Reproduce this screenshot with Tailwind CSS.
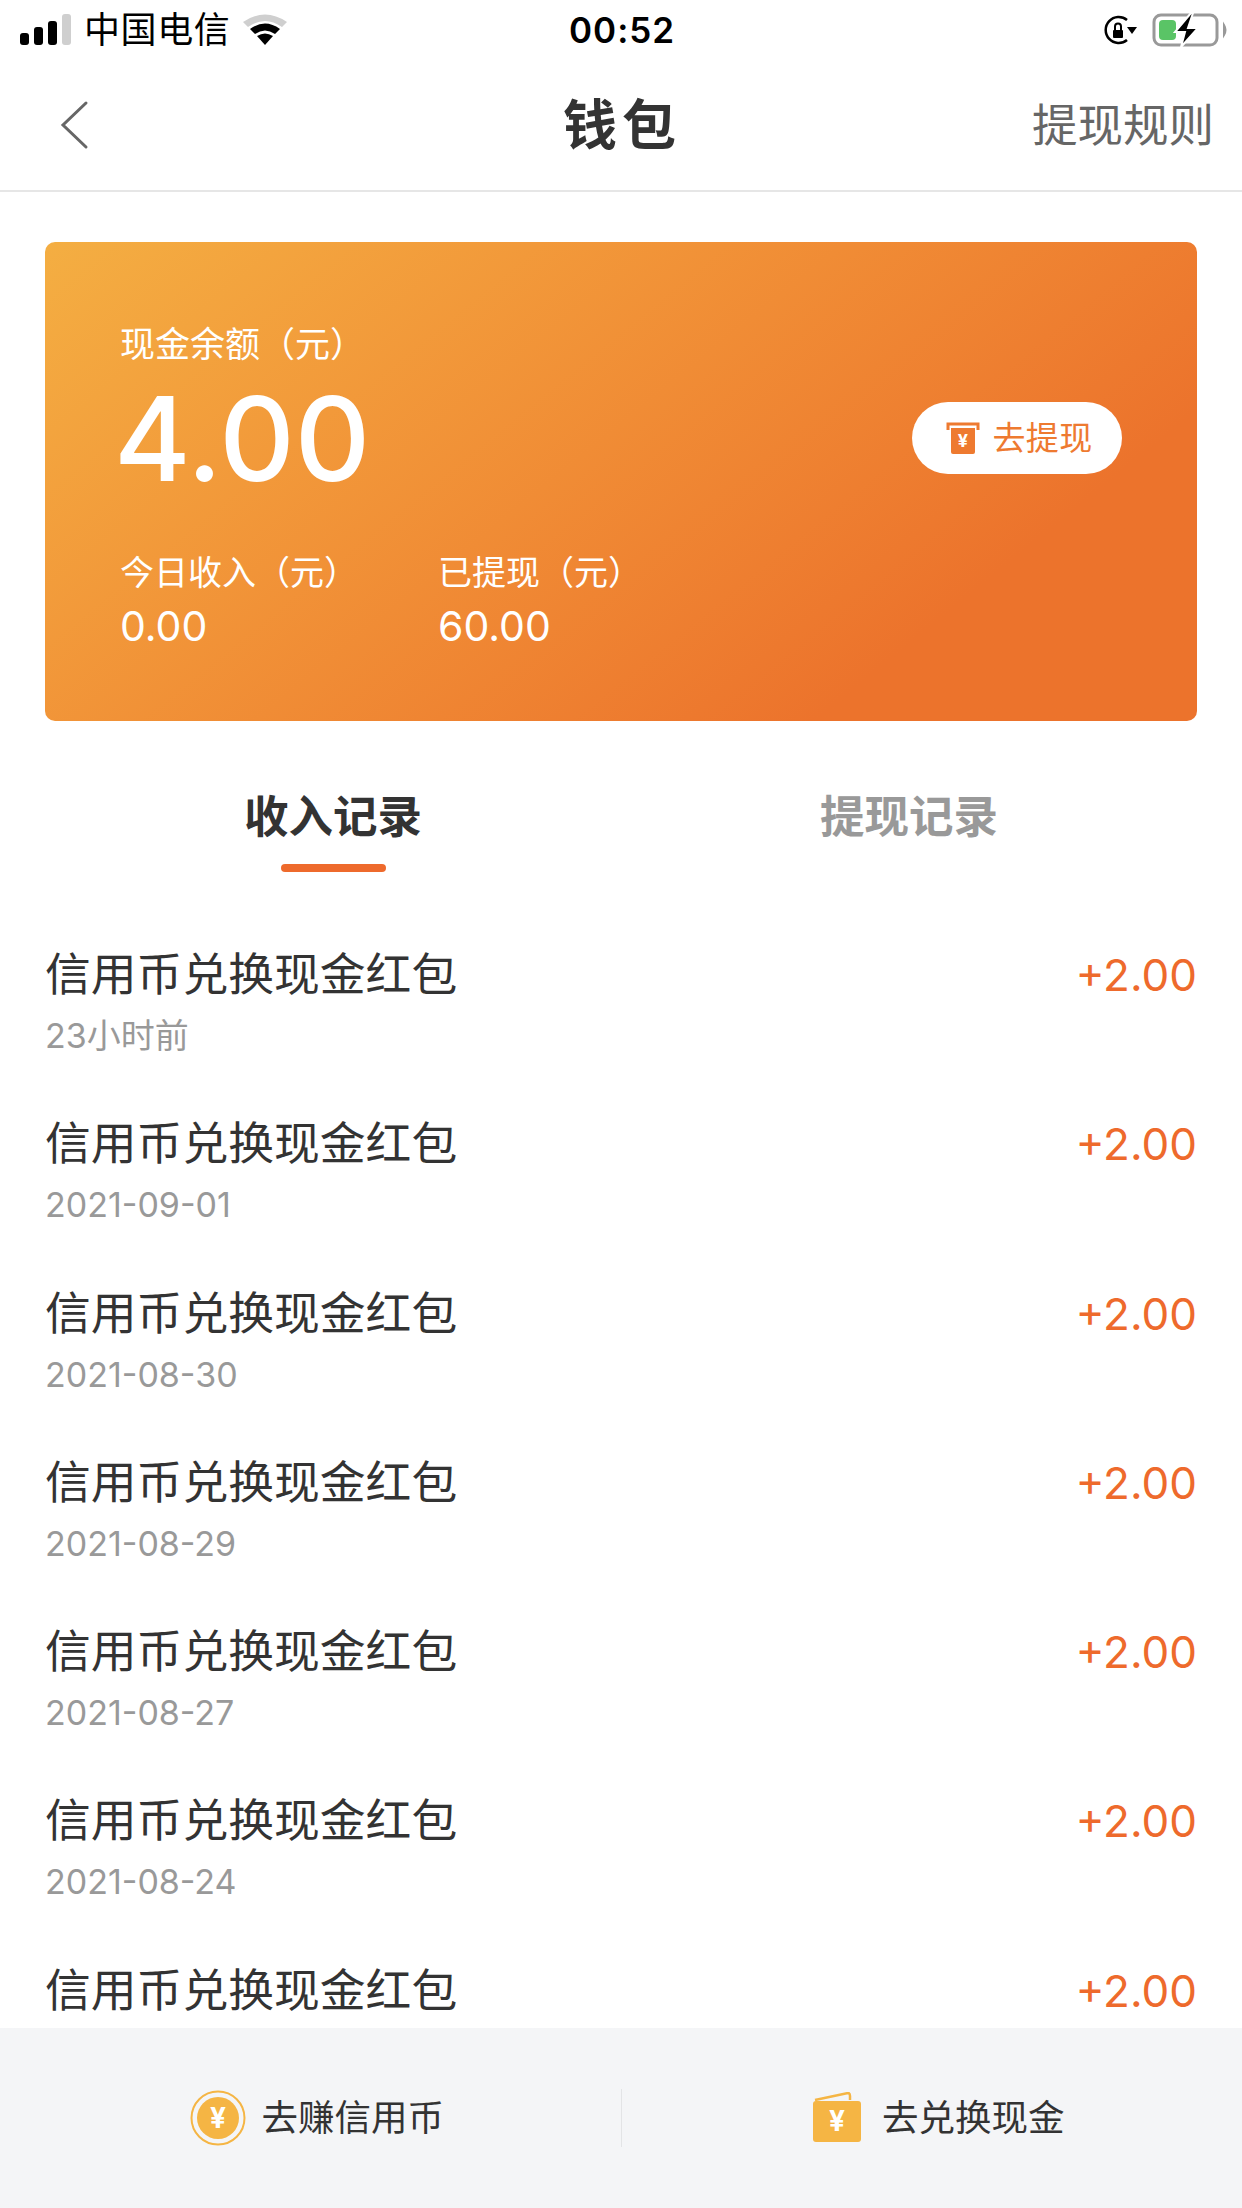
<!DOCTYPE html>
<html lang="zh-CN">
  <head>
    <meta charset="UTF-8" />
    <meta name="viewport" content="width=device-width, initial-scale=1.0" />
    <title>钱包</title>
    <script src="https://cdn.jsdelivr.net/npm/@tailwindcss/browser@4"></script>
  </head>
  <body class="bg-white">
    <div class="w-[1242px] h-[2208px] flex flex-col overflow-hidden font-['Inter','Noto_Sans_CJK_SC',sans-serif] text-[#333333]">
      <!-- Status bar -->
      <div class="h-[60px] shrink-0 flex items-center justify-between pl-[20px] pr-[14px] text-black">
        <div class="flex items-center">
          <svg width="52" height="34" viewBox="0 0 52 34">
            <rect x="0" y="20" width="9" height="12" rx="3" fill="#000" />
            <rect x="14" y="14" width="9" height="18" rx="3" fill="#000" />
            <rect x="28" y="8" width="9" height="24" rx="3" fill="#000" />
            <rect x="42" y="1" width="9" height="31" rx="3" fill="#cfcfcf" />
          </svg>
          <span class="ml-[12px] text-[36px] tracking-[0.6px] leading-none">中国电信</span>
          <svg class="ml-[12px]" width="46" height="34" viewBox="0 0 46 34">
            <path d="M1 9 Q23 -6 45 9 L40 14 Q23 2 6 14 Z" fill="#cfcfcf" />
            <path d="M8 16 Q23 5 38 16 L33 21 Q23 14 13 21 Z" fill="#000" />
            <path d="M15 23 Q23 18 31 23 L23 32 Z" fill="#000" />
          </svg>
        </div>
        <span class="text-[35px] font-semibold tracking-[1px] absolute left-[569px]">00:52</span>
        <div class="flex items-center">
          <svg width="34" height="34" viewBox="0 0 34 34">
            <path d="M23 7 A13 13 0 1 0 23 27" fill="none" stroke="#000" stroke-width="2.5" />
            <path d="M23 14 H33 L28 21 Z" fill="#000" />
            <rect x="9" y="17" width="10" height="8" rx="1" fill="#000" />
            <path d="M11 17 V13.5 A3 3 0 0 1 17 13.5 V17" fill="none" stroke="#000" stroke-width="2" />
          </svg>
          <svg class="ml-[14px]" width="76" height="36" viewBox="0 0 76 36">
            <rect x="2" y="3" width="63" height="30" rx="7" fill="none" stroke="#999999" stroke-width="3" />
            <path d="M72 13 Q75 18 72 23 Z" fill="#999999" stroke="#999999" stroke-width="2" />
            <rect x="7" y="8" width="17" height="20" rx="4" fill="#5ac466" />
            <path d="M39 1 L23 20 L33 20 L29 35 L46 16 L36 16 L41 1 Z" fill="#000" stroke="#fff" stroke-width="2" />
          </svg>
        </div>
      </div>

      <!-- Nav bar -->
      <header class="h-[132px] shrink-0 relative flex items-center justify-center border-b-[2px] border-[#e6e6e6]">
        <svg class="absolute left-[60px] top-[40px]" width="30" height="50" viewBox="0 0 30 50">
          <path d="M26 3 L3 25 L26 47" fill="none" stroke="#666666" stroke-width="3" stroke-linecap="round" />
        </svg>
        <h1 class="text-[54px] font-bold tracking-[5px] pl-[2px] text-[#333333]">钱包</h1>
        <a class="absolute right-[28px] mt-[2px] text-[45.5px] text-[#666666]">提现规则</a>
      </header>

      <main class="flex-1 min-h-0 overflow-hidden">
        <!-- Balance card -->
        <section class="mx-[45px] mt-[50px] h-[479px] rounded-[10px] bg-linear-141 from-[#f4ae42] to-[#ec732c] to-[78%] px-[75px] pt-[80px] text-white">
          <p class="text-[35px] leading-[44px]">现金余额（元）</p>
          <div class="flex items-center justify-between mt-[3px]">
            <p class="text-[117px] leading-[140px] font-medium -ml-[6px]">4.00</p>
            <button class="w-[210px] h-[72px] mb-[3px] pl-[5px] rounded-full bg-white flex items-center justify-center gap-[12px] text-[#ee7a30] text-[33px]">
              <svg width="34" height="34" viewBox="0 0 34 34">
                <path d="M2 9 V3 H32 V9" fill="none" stroke="#ee7a30" stroke-width="3" />
                <path d="M5 7 H29 V31 Q29 33 27 33 H7 Q5 33 5 31 Z" fill="#ee7a30" />
                <text x="17" y="26" text-anchor="middle" font-size="18" font-weight="700" fill="#fff">¥</text>
              </svg>
              <span class="tracking-[0.4px] mt-[2px]">去提现</span>
            </button>
          </div>
          <div class="flex mt-[42px]">
            <div class="w-[318px]">
              <p class="text-[34px] leading-[44px]">今日收入（元）</p>
              <p class="text-[41px] leading-[63px]">0.00</p>
            </div>
            <div>
              <p class="text-[34px] leading-[44px]">已提现（元）</p>
              <p class="text-[41px] leading-[63px]">60.00</p>
            </div>
          </div>
        </section>

        <!-- Tabs -->
        <nav class="flex mt-[64px] h-[90px] px-[45px] text-[44.5px] font-bold leading-[64px]">
          <div class="flex-1 flex flex-col items-center text-[#333333]">
            <span>收入记录</span>
            <span class="w-[105px] h-[8px] rounded-full bg-[#ee6a2c] mt-[15px]"></span>
          </div>
          <div class="flex-1 flex justify-center text-[#999999]">提现记录</div>
        </nav>

        <!-- Records -->
        <ul class="mt-[68px] px-[45px]">
          <li class="h-[169.3px] flex justify-between">
            <div>
              <p class="text-[45.8px] leading-[64px]">信用币兑换现金红包</p>
              <p class="text-[34px] leading-[44px] mt-[7px] text-[#999999]">23小时前</p>
            </div>
            <span class="text-[44px] leading-[64px] text-[#ee6a2c]">+2.00</span>
          </li>
          <li class="h-[169.3px] flex justify-between">
            <div>
              <p class="text-[45.8px] leading-[64px]">信用币兑换现金红包</p>
              <p class="text-[34px] leading-[44px] mt-[7px] text-[#999999]">2021-09-01</p>
            </div>
            <span class="text-[44px] leading-[64px] text-[#ee6a2c]">+2.00</span>
          </li>
          <li class="h-[169.3px] flex justify-between">
            <div>
              <p class="text-[45.8px] leading-[64px]">信用币兑换现金红包</p>
              <p class="text-[34px] leading-[44px] mt-[7px] text-[#999999]">2021-08-30</p>
            </div>
            <span class="text-[44px] leading-[64px] text-[#ee6a2c]">+2.00</span>
          </li>
          <li class="h-[169.3px] flex justify-between">
            <div>
              <p class="text-[45.8px] leading-[64px]">信用币兑换现金红包</p>
              <p class="text-[34px] leading-[44px] mt-[7px] text-[#999999]">2021-08-29</p>
            </div>
            <span class="text-[44px] leading-[64px] text-[#ee6a2c]">+2.00</span>
          </li>
          <li class="h-[169.3px] flex justify-between">
            <div>
              <p class="text-[45.8px] leading-[64px]">信用币兑换现金红包</p>
              <p class="text-[34px] leading-[44px] mt-[7px] text-[#999999]">2021-08-27</p>
            </div>
            <span class="text-[44px] leading-[64px] text-[#ee6a2c]">+2.00</span>
          </li>
          <li class="h-[169.3px] flex justify-between">
            <div>
              <p class="text-[45.8px] leading-[64px]">信用币兑换现金红包</p>
              <p class="text-[34px] leading-[44px] mt-[7px] text-[#999999]">2021-08-24</p>
            </div>
            <span class="text-[44px] leading-[64px] text-[#ee6a2c]">+2.00</span>
          </li>
          <li class="h-[169.3px] flex justify-between">
            <div>
              <p class="text-[45.8px] leading-[64px]">信用币兑换现金红包</p>
            </div>
            <span class="text-[44px] leading-[64px] text-[#ee6a2c]">+2.00</span>
          </li>
        </ul>
      </main>

      <!-- Bottom bar -->
      <footer class="h-[180px] shrink-0 bg-[#f4f5f7] flex items-center text-[36.5px] text-[#333333]">
        <div class="flex-1 flex items-center justify-center gap-[16px] pl-[13px]">
          <svg width="56" height="56" viewBox="0 0 56 56">
            <circle cx="28" cy="28" r="26.5" fill="none" stroke="#f5b544" stroke-width="2" />
            <circle cx="28" cy="28" r="21" fill="#f5b544" />
            <text x="28" y="38" text-anchor="middle" font-size="28" font-weight="700" fill="#fff">¥</text>
          </svg>
          去赚信用币
        </div>
        <div class="w-px h-[58px] bg-[#e3e4e6]"></div>
        <div class="flex-1 flex items-center justify-center gap-[20px] pl-[13px]">
          <svg width="50" height="52" viewBox="0 0 50 52">
            <path d="M3 8 L36 1 Q38 1 38 4 V8" fill="none" stroke="#f5b544" stroke-width="2.5" />
            <rect x="1" y="9" width="48" height="41" rx="3" fill="#f5b544" />
            <text x="25" y="39" text-anchor="middle" font-size="28" font-weight="700" fill="#fff">¥</text>
          </svg>
          去兑换现金
        </div>
      </footer>
    </div>
  </body>
</html>
